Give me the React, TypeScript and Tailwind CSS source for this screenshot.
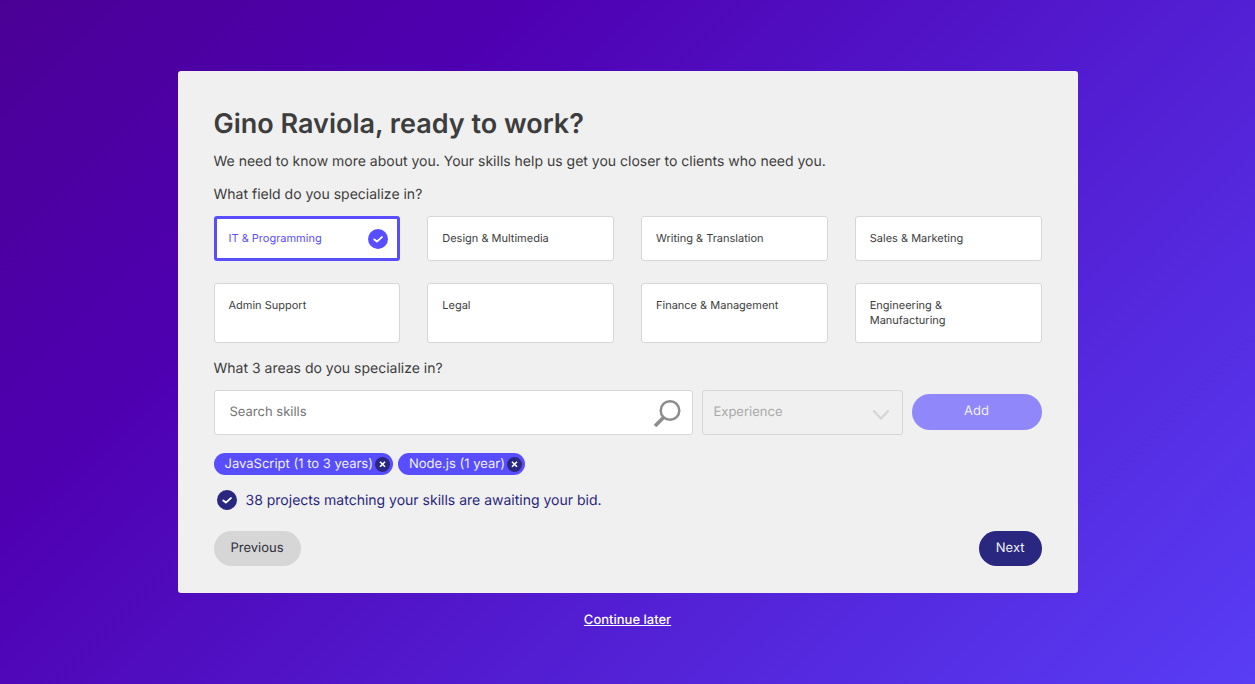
import { useState } from "react";

const FIELDS = [
  "IT & Programming",
  "Design & Multimedia",
  "Writing & Translation",
  "Sales & Marketing",
  "Admin Support",
  "Legal",
  "Finance & Management",
  "Engineering & Manufacturing",
];

function CheckBadge({ className }: { className: string }) {
  return (
    <svg viewBox="0 0 20 20" className={className} aria-hidden="true">
      <circle cx="10" cy="10" r="10" fill="currentColor" />
      <path
        d="M6.3 10.4 8.9 12.6 13.9 8.1"
        fill="none"
        stroke="#fff"
        strokeWidth="1.9"
        strokeLinecap="round"
        strokeLinejoin="round"
      />
    </svg>
  );
}

function FieldOption({ label, checked, onSelect }: { label: string; checked: boolean; onSelect: () => void }) {
  return (
    <label
      className={
        checked
          ? "flex cursor-pointer items-center justify-between rounded-[3px] border-3 border-[#584dff] bg-white pr-[9px] pl-3 text-[11px] leading-[15px] text-[#584dff]"
          : "flex cursor-pointer items-start rounded-[3px] border border-[#d6d6d6] bg-white px-3.5 py-3.5 text-[11px] leading-[15px] text-[#3d3d3d]"
      }
    >
      <input type="radio" name="field" className="sr-only" checked={checked} onChange={onSelect} />
      <span className="max-w-32">{label}</span>
      {checked && <CheckBadge className="size-5 shrink-0" />}
    </label>
  );
}

function SkillTag({ label, onRemove }: { label: string; onRemove: () => void }) {
  return (
    <li className="flex h-[22px] items-center gap-0.5 rounded-full bg-[#584dff] pr-[3px] pl-[11px] text-[13px] leading-5 text-[#f0f0f0]">
      {label}
      <button
        type="button"
        aria-label={`Remove ${label}`}
        onClick={onRemove}
        className="flex size-[15px] items-center justify-center rounded-full bg-[#29277f]"
      >
        <svg viewBox="0 0 15 15" className="size-[15px]" aria-hidden="true">
          <path d="M5 4.8l5 5M10 4.8l-5 5" stroke="#fff" strokeWidth="1.6" />
        </svg>
      </button>
    </li>
  );
}

export default function App() {
  const [field, setField] = useState(FIELDS[0]);
  const [skills, setSkills] = useState(["JavaScript (1 to 3 years)", "Node.js (1 year)"]);

  return (
    <div className="flex min-h-screen flex-col items-center bg-[linear-gradient(135deg,#4b0095_0%,#4e00b1_27%,#583df5_100%)] px-4 pt-[71px] pb-12 font-['Inter',sans-serif] [&_*]:[text-rendering:geometricPrecision]">
      <main className="w-full max-w-[900px] rounded-[3px] bg-[#f0f0f0] px-9 pt-9 pb-[27px] text-[#3d3d3d]">
        <h1 className="text-[27px] leading-[34px] font-semibold">Gino Raviola, ready to work?</h1>
        <p className="mt-2.5 text-[14px] leading-[22px]">
          We need to know more about you. Your skills help us get you closer to clients who need you.
        </p>

        <fieldset className="mt-[11px]">
          <legend className="text-[14px] leading-[22px]">What field do you specialize in?</legend>
          <div className="mt-2.5 grid grid-cols-2 gap-x-[27px] gap-y-[22px] md:grid-cols-4">
            {FIELDS.map((name) => (
              <FieldOption key={name} label={name} checked={field === name} onSelect={() => setField(name)} />
            ))}
          </div>
        </fieldset>

        <label htmlFor="skill-search" className="mt-[15px] block text-[14px] leading-[22px]">
          What 3 areas do you specialize in?
        </label>
        <div className="mt-2.5 flex items-start gap-[9px]">
          <div className="flex h-[45px] min-w-0 flex-1 items-center rounded-[3px] border border-[#d6d6d6] bg-white pr-[11px] pl-[15px]">
            <input
              id="skill-search"
              type="text"
              placeholder="Search skills"
              className="min-w-0 flex-1 bg-transparent pb-0.5 text-[13px] leading-5 outline-none placeholder:text-[#757575]"
            />
            <svg viewBox="0 0 28 28" className="size-7 shrink-0" aria-hidden="true" fill="none" stroke="#8c8c8c">
              <circle cx="17" cy="11.5" r="9.3" strokeWidth="2.5" />
              <path d="M10.5 18.5 2 27" strokeWidth="3.6" />
            </svg>
          </div>
          <div className="grid w-[201px] grid-cols-1 items-center">
            <select
              disabled
              aria-label="Experience"
              className="col-start-1 row-start-1 h-[45px] w-full appearance-none rounded-[3px] border border-[#d6d6d6] bg-transparent px-[11px] text-[13px] text-[#a9a9a9] opacity-100"
            >
              <option>Experience</option>
            </select>
            <svg
              viewBox="0 0 18 12"
              className="pointer-events-none col-start-1 row-start-1 mt-1 mr-[13px] h-3 w-[18px] justify-self-end"
              aria-hidden="true"
            >
              <path d="M1.3 1.5 9 9.5l7.7-8" fill="none" stroke="#d6d6d6" strokeWidth="2.4" />
            </svg>
          </div>
          <button type="button" disabled className="mt-1 h-9 w-[130px] rounded-full bg-[#8f87fa] text-[13px] text-[#f0f0f0]">
            Add
          </button>
        </div>

        <ul className="mt-[18px] flex flex-wrap gap-[5px]">
          {skills.map((skill) => (
            <SkillTag key={skill} label={skill} onRemove={() => setSkills(skills.filter((s) => s !== skill))} />
          ))}
        </ul>

        <p className="mt-[15px] flex items-start gap-[9px] pl-[3px] text-[14px] leading-[22px] text-[#29277f]">
          <CheckBadge className="size-5 shrink-0" />
          38 projects matching your skills are awaiting your bid.
        </p>

        <div className="mt-[19px] flex justify-between">
          <button type="button" className="h-[35px] rounded-full bg-[#d6d6d6] px-[17px] text-[13px] text-[#2f2f3d]">
            Previous
          </button>
          <button type="button" className="h-[35px] rounded-full bg-[#29277f] px-[17px] text-[13px] text-[#f0f0f0]">
            Next
          </button>
        </div>
      </main>
      <a href="#later" className="mt-[17px] text-[13px] leading-5 font-medium text-white underline">
        Continue later
      </a>
    </div>
  );
}
